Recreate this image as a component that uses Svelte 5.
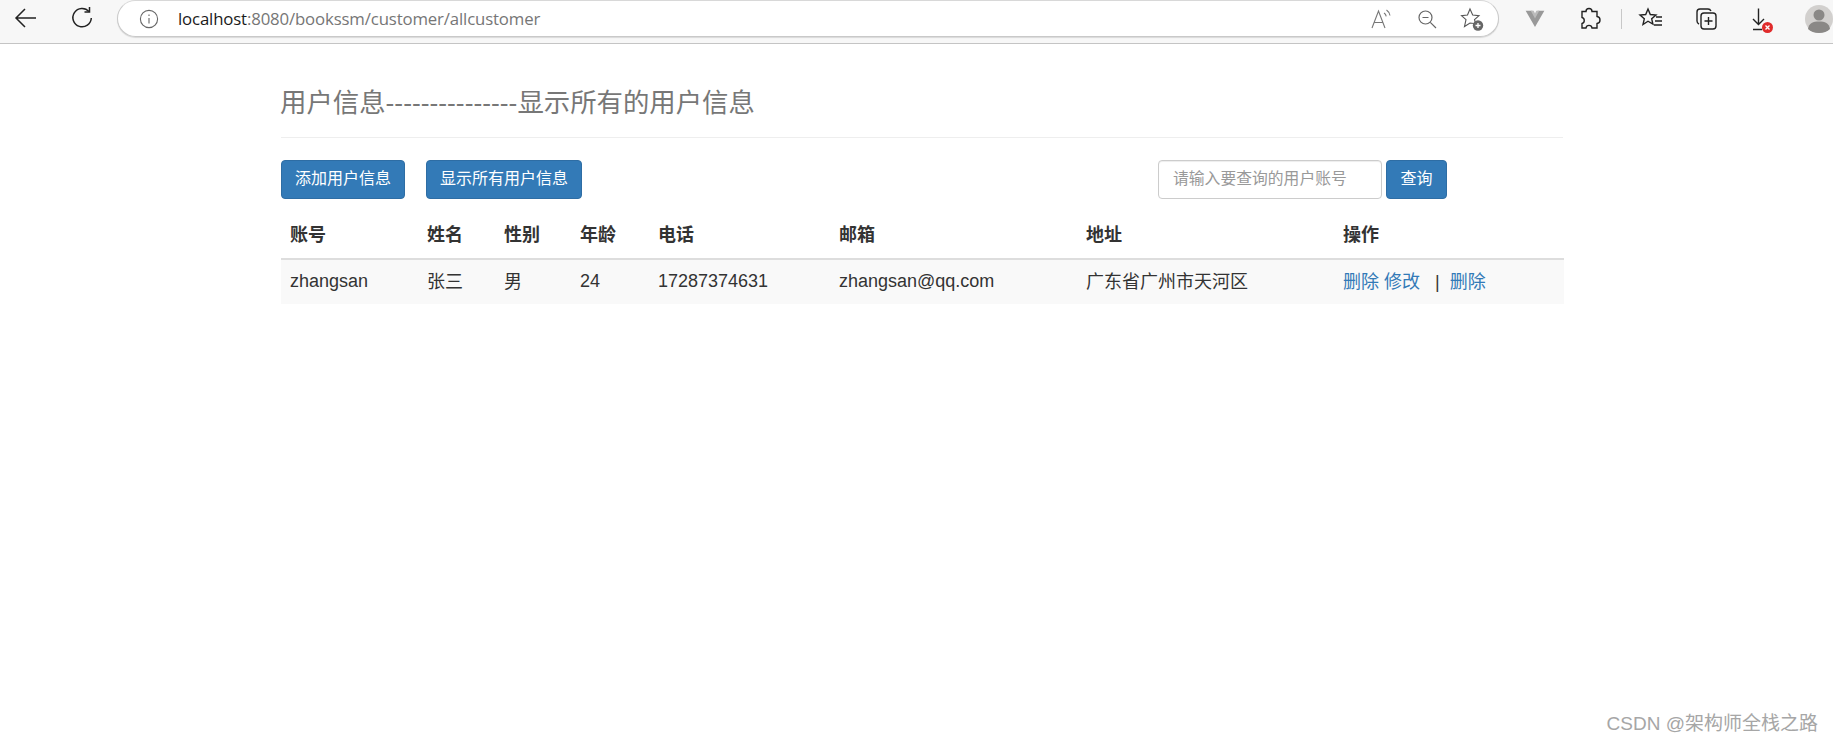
<script>
  const columns = [
    { label: '账号', width: 137 },
    { label: '姓名', width: 77 },
    { label: '性别', width: 76 },
    { label: '年龄', width: 78 },
    { label: '电话', width: 181 },
    { label: '邮箱', width: 247 },
    { label: '地址', width: 257 },
    { label: '操作', width: 230 }
  ];
  const row = [
    { text: 'zhangsan' },
    { text: '张三', cjk: true },
    { text: '男', cjk: true },
    { text: '24' },
    { text: '17287374631' },
    { text: 'zhangsan@qq.com' },
    { text: '广东省广州市天河区', cjk: true }
  ];
</script>

<div class="shell">
  <header class="bar">
    <button class="nav" aria-label="后退">
      <svg width="26" height="26" viewBox="0 0 26 26" fill="none" stroke="#222" stroke-width="1.5"><path d="M23 13H3M12 4l-9 9 9 9"/></svg>
    </button>
    <button class="nav" aria-label="刷新">
      <svg width="26" height="26" viewBox="0 0 26 26" fill="none" stroke="#222" stroke-width="1.5"><path d="M20 6.500A9.200 9.200 0 1 0 22.300 13"/><path d="M20.500 2v5h-5"/></svg>
    </button>
    <div class="address">
      <svg class="info" width="20" height="20" viewBox="0 0 20 20" fill="none" stroke="#666" stroke-width="1.1"><circle cx="10" cy="10" r="8.600"/><path d="M10 9v5.500M10 5.600v1.500"/></svg>
      <span class="url"><span class="host">localhost</span>:8080/bookssm/customer/allcustomer</span>
      <div class="inner-icons">
        <svg width="26" height="26" viewBox="0 0 26 26" fill="none" stroke="#777" stroke-width="1.1"><path d="M3 22L9.500 5 16 22M5 16.500h9"/><path d="M15 7c1.300.8 2 1.900 2.200 3.300M17.500 4c2 1.400 3.200 3.300 3.500 5.500"/></svg>
        <svg width="26" height="26" viewBox="0 0 26 26" fill="none" stroke="#666" stroke-width="1.2"><circle cx="11.500" cy="11.500" r="6.500"/><path d="M8.500 11.500h6M16.300 16.300l5.700 5.700"/></svg>
        <svg width="26" height="26" viewBox="0 0 26 26" fill="none" stroke="#555" stroke-width="1.1"><path d="M11 3l2.700 6 6.300.6-4.500 4.100 1.200 4-5.700-.7-5.500 3.500 1.500-6.800L2.500 9.600 8.500 9z"/><circle cx="19" cy="19.500" r="5.200" fill="#666" stroke="none"/><path d="M19 17v5M16.500 19.500h5" stroke="#fff" stroke-width="1.300"/></svg>
      </div>
    </div>
    <div class="tools">
      <span class="slot"><svg width="20" height="17" viewBox="0 0 22 20"><path d="M0 1h8l3 5 3-5h8L11 20z" fill="#999"/><path d="M6 1h3.500L11 4l1.500-3H16l-5 9z" fill="#bbb"/></svg></span>
      <span class="slot"><svg width="26" height="26" viewBox="1 0 26 26" fill="none" stroke="#222" stroke-width="1.4"><path d="M10 5.500c0-4 6-4 6 0h5v5c4 .5 4 6.500 0 7v4.500h-5c-.5-3.500-5.500-3.500-6 0H6v-4.500c3-.5 3-5.500 0-6V5.500z"/></svg></span>
      <span class="sep"></span>
      <span class="slot"><svg width="26" height="26" viewBox="0 0 26 26" fill="none" stroke="#222" stroke-width="1.4"><path d="M10 3l2.300 5.500 5.700.5-4.300 3.800 1.200 5.200-4.900-2.800L5 18.500l1.300-5.700L2 9l5.700-.5z"/><path d="M18 11h6M17 15h7M16 19h8"/></svg></span>
      <span class="slot"><svg width="26" height="26" viewBox="0 0 26 26" fill="none" stroke="#222" stroke-width="1.4"><path d="M6 18c-1-.5-2-1.500-2-3V6c0-2 1.500-3 3-3h8c1.500 0 2.500 1 3 2"/><rect x="8" y="7" width="15" height="16" rx="3"/><path d="M15.500 11v8M11.500 15h8"/></svg></span>
      <span class="slot"><svg width="30" height="28" viewBox="0 0 30 28" fill="none" stroke="#222" stroke-width="1.400"><path d="M12.500 3.500v16M7 14l5.500 5.500L18 14M7 24.500h9"/><circle cx="21.500" cy="22.500" r="5.500" fill="#e02b2b" stroke="none"/><path d="M19.500 20.500l4 4M23.500 20.500l-4 4" stroke="#fff" stroke-width="1.300"/></svg></span>
      <span class="slot avatar"><svg width="28" height="28" viewBox="0 0 28 28"><circle cx="14" cy="14" r="14" fill="#d2d0ce"/><circle cx="14" cy="10" r="5.500" fill="#8a8886"/><path d="M3 24c1-6 5-7.500 11-7.500S24 18 25 24c-2.500 2.500-6.500 4-11 4s-8.500-1.500-11-4z" fill="#8a8886"/></svg></span>
    </div>
  </header>

  <main class="page">
    <h1>用户信息---------------显示所有的用户信息</h1>
    <hr />
    <div class="actions">
      <button class="btn first">添加用户信息</button>
      <button class="btn second">显示所有用户信息</button>
      <form class="search" onsubmit={(e) => e.preventDefault()}>
        <input placeholder="请输入要查询的用户账号" />
        <button class="btn query">查询</button>
      </form>
    </div>
    <table>
      <colgroup>
        {#each columns as col}
          <col style="width: {col.width}px" />
        {/each}
      </colgroup>
      <thead>
        <tr>
          {#each columns as col}
            <th>{col.label}</th>
          {/each}
        </tr>
      </thead>
      <tbody>
        <tr>
          {#each row as cell}
            <td class:cjk={cell.cjk}>{cell.text}</td>
          {/each}
          <td class="cjk"><a href="#a">删除</a> <a href="#b">修改</a> <span class="pipe">|</span> <a href="#c">删除</a></td>
        </tr>
      </tbody>
    </table>
  </main>
  <div class="watermark">CSDN @架构师全栈之路</div>
</div>

<style>
  :global(body) {
    margin: 0;
    background: #fff;
    overflow: hidden;
  }
  .shell {
    position: relative;
    height: 743px;
    overflow: hidden;
    font-family: "Liberation Sans", "Noto Sans CJK SC", sans-serif;
    color: #333;
  }
  .bar {
    height: 43px;
    box-sizing: content-box;
    background: #f7f7f7;
    border-bottom: 1px solid #c4c4c4;
    display: flex;
    align-items: flex-start;
  }
  .nav {
    flex: none;
    width: 50px;
    height: 36px;
    padding: 0;
    border: 0;
    background: none;
    display: flex;
    align-items: center;
    justify-content: center;
  }
  .nav:first-child { width: 52px; }
  .nav + .nav { width: 60px; margin-right: 5px; }
  .address {
    flex: none;
    width: 1382px;
    height: 37px;
    box-sizing: border-box;
    background: #fff;
    border: 1px solid #c9c9c9;
    border-top-color: #d8d8d8;
    border-radius: 19px;
    box-shadow: 0 1px 1px rgba(0, 0, 0, .12);
    display: flex;
    align-items: center;
    padding-left: 21px;
  }
  .info { margin-right: 19px; }
  .url {
    font-family: "Open Sans", sans-serif;
    font-size: 16.800px;
    color: #767676;
    letter-spacing: -.15px;
  }
  .host { color: #1a1a1a; }
  .inner-icons {
    margin-left: auto;
    margin-right: 13px;
    display: flex;
    gap: 19px;
  }
  .tools {
    flex: none;
    display: flex;
    align-items: center;
    height: 37px;
    margin-left: 8px;
  }
  .slot {
    flex: none;
    width: 55px;
    display: flex;
    justify-content: center;
    align-items: center;
  }
  .avatar { margin-left: 3px; }
  .sep {
    flex: none;
    width: 1px;
    height: 20px;
    margin: 0 1px 0 4px;
    background: #c8c8c8;
  }
  .page {
    width: 1282px;
    margin-left: 281px;
  }
  h1 {
    margin: 0 0 0 -1px;
    height: 93px;
    box-sizing: border-box;
    padding-top: 43px;
    font-size: 26.400px;
    line-height: 33px;
    font-weight: 400;
    color: #777;
  }
  hr {
    margin: 0;
    border: 0;
    border-top: 1px solid #eee;
  }
  .actions {
    display: flex;
    margin-top: 22px;
  }
  .btn {
    height: 39px;
    padding: 0 0 6px;
    box-sizing: border-box;
    background: #337ab7;
    border: 1px solid #2e6da4;
    border-radius: 4px;
    color: #fff;
    font: 400 16px "Liberation Sans", "Noto Sans CJK SC", sans-serif;
  }
  .first { width: 124px; }
  .second { width: 156px; margin-left: 21px; }
  .search {
    display: flex;
    margin-left: 576px;
    gap: 4px;
  }
  input {
    width: 224px;
    height: 39px;
    box-sizing: border-box;
    padding: 0 14px 1px;
    background: #fff;
    border: 1px solid #ccc;
    border-radius: 4px;
    box-shadow: inset 0 1px 1px rgba(0, 0, 0, .075);
    font: 400 15.800px "Liberation Sans", "Noto Sans CJK SC", sans-serif;
    color: #555;
  }
  input::placeholder { color: #999; opacity: 1; }
  .query { width: 61px; }
  table {
    width: 1282px;
    margin-top: 15px;
    table-layout: fixed;
    border-collapse: collapse;
    font-size: 18px;
  }
  th {
    height: 45px;
    padding: 0 10px 6px 9px;
    box-sizing: border-box;
    text-align: left;
    font-weight: 700;
    border-bottom: 2px solid #ddd;
  }
  td {
    height: 45px;
    padding: 0 10px 1px 9px;
    box-sizing: border-box;
    background: #f9f9f9;
    white-space: nowrap;
  }
  td.cjk { padding-bottom: 5px; }
  a {
    color: #337ab7;
    text-decoration: none;
  }
  .pipe { margin: 0 5px 0 10px; }
  .watermark {
    position: absolute;
    right: 15px;
    bottom: 8px;
    font-size: 19px;
    color: #a6a6a6;
  }
</style>
